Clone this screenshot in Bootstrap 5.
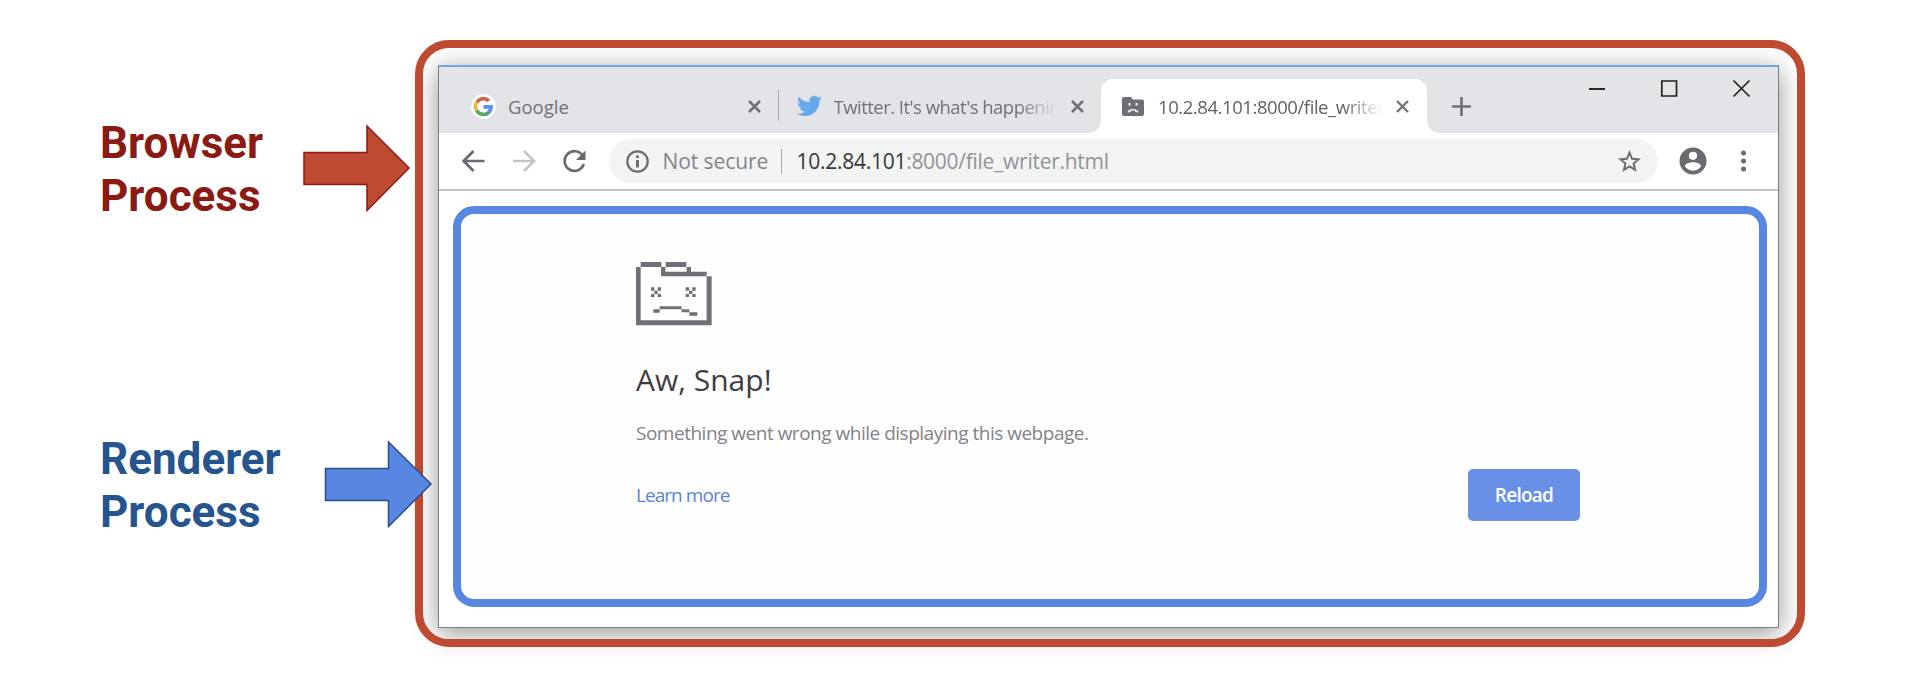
<!DOCTYPE html>
<html lang="en">
<head>
<meta charset="utf-8">
<title>Browser and renderer processes</title>
<link href="https://cdn.jsdelivr.net/npm/bootstrap@5.3.0/dist/css/bootstrap.min.css" rel="stylesheet">
<style>
body{background:#fff;overflow:hidden;font-family:"Open Sans","Noto Sans",sans-serif;color:#717276}
svg{display:block;flex:none;overflow:visible}
.diagram{width:1930px;height:684px}
.legend-col{width:415px;padding:117px 0 0 100px;gap:209px;z-index:2}
.proc{font:700 44px/53.4px Roboto,sans-serif;color:#8a1a12}
.proc-name{flex:none}
.proc-arrow{margin-top:8px}
.proc-blue{color:#25548f}
.outer-frame{width:1390px;height:606.5px;margin-top:40px;padding:25px 26px 18.5px 23px}
.outer-frame::after{content:"";position:absolute;inset:0;border:8.5px solid #be4a31;border-radius:34px;pointer-events:none}
.win{border:1px solid #7d7d7d;border-top:2px solid #78a5db;box-shadow:0 5px 24px rgba(0,0,0,.42)}
.tabstrip{height:66px;background:#e3e4e8;padding:12px 0 0 19px}
.tab-item{height:54px;font-size:18.5px;padding-right:17px}
.tab-title{white-space:nowrap;overflow:hidden;line-height:53px;position:relative}
.fade-end{-webkit-mask-image:linear-gradient(90deg,#000 calc(100% - 40px),transparent);mask-image:linear-gradient(90deg,#000 calc(100% - 40px),transparent)}
.sep{width:1px;background:#a5a7ab}
.tab-on{background:#fff;border-radius:12px 12px 0 0}
.tab-on::before,.tab-on::after{content:"";position:absolute;bottom:0;width:12px;height:12px}
.tab-on::before{left:-12px;background:radial-gradient(circle at 0 0,transparent 11.5px,#fff 12px)}
.tab-on::after{right:-12px;background:radial-gradient(circle at 100% 0,transparent 11.5px,#fff 12px)}
.toolbar{height:58px;border-bottom:2px solid #c2c2c2;padding-left:23px}
.omni{width:1049px;height:44px;border-radius:22px;background:#f2f4f4;font-size:21px;line-height:44px;padding:0 17px}
.page{padding:15px 11px 20.5px 13.5px;background:#fff}
.renderer{border:8px solid #5787e1;border-radius:21px;background:#fefefe;padding:48px 179px 0 175.5px}
.snap{font-size:30px;line-height:40px;color:#3e3e42;margin-top:35px}
.msg{font-size:19px;line-height:26px;letter-spacing:-.49px;margin-top:20px;color:#828287}
.learn{font-size:19px;letter-spacing:-.95px;color:#5a83d5}
.reload{width:112px;height:52px;background:#6790e6;border:0;border-radius:5px;color:#fff;font-size:19px;font-weight:600;letter-spacing:-.75px;padding:0;line-height:52px}
</style>
</head>
<body>
<div class="diagram d-flex align-items-start">
  <div class="legend-col d-flex flex-column flex-shrink-0 position-relative">
    <div class="proc d-flex">
      <div class="proc-name" style="width:203px">Browser<br>Process</div>
      <svg class="proc-arrow" width="107" height="86" viewBox="0 0 107 86"><path d="M1 27.500H64V1L106 43 64 85.500V59.500H1z" fill="#be4a31" stroke="#8b1a16" stroke-width="1.500"/></svg>
    </div>
    <div class="proc proc-blue d-flex">
      <div class="proc-name" style="width:225px">Renderer<br>Process</div>
      <svg class="proc-arrow" width="107" height="86" viewBox="0 0 107 86"><path d="M.5 27.500H63.500V1L106 43 63.500 85.500V59.500H.5z" fill="#5787e1" stroke="#2b4d8e" stroke-width="1.500"/></svg>
    </div>
  </div>

  <div class="outer-frame position-relative flex-shrink-0 d-flex">
    <div class="win flex-fill d-flex flex-column">
      <div class="tabstrip d-flex align-items-end">
        <div class="tab-item d-flex align-items-center" style="width:320px">
          <svg style="margin:0 12px 0 13px" width="25" height="25" viewBox="212 190 76 76"><circle cx="250" cy="228" r="38" fill="#fff"/><g fill="none" stroke-width="11"><path d="M266.500 210.500A24 24 0 0 0 230 215" stroke="#d4604f"/><path d="M230 215a24 24 0 0 0-1 25" stroke="#f0bb42"/><path d="M229 240a24 24 0 0 0 36 7" stroke="#5ba865"/><path d="M264 248a24 24 0 0 0 9-19H250" stroke="#5f8fee"/></g></svg>
          <span class="tab-title flex-fill">Google</span>
          <svg width="13" height="13" viewBox="0 0 13 13"><path d="M1 1l11 11M12 1L1 12" stroke="#707175" stroke-width="2.500"/></svg>
        </div>
        <div class="sep align-self-center" style="height:31px;margin-top:-1px"></div>
        <div class="tab-item d-flex align-items-center" style="width:322px">
          <svg style="margin:0 12px 0 17.500px" width="25" height="22" viewBox="0 0 24 20"><path d="M23.950 2.600a10 10 0 0 1-2.800.8 5 5 0 0 0 2.150-2.700 10 10 0 0 1-3.100 1.150A4.900 4.900 0 0 0 11.900 6.300 14 14 0 0 1 1.700 1.100a4.900 4.900 0 0 0 1.500 6.500A5 5 0 0 1 1 7a4.900 4.900 0 0 0 3.950 4.900 5 5 0 0 1-2.200.1 4.900 4.900 0 0 0 4.600 3.400A10 10 0 0 1 0 17.450 14 14 0 0 0 7.550 19.700c9.100 0 14.300-7.700 14-14.700a10 10 0 0 0 2.400-2.400z" fill="#67a9ea"/></svg>
          <span class="tab-title fade-end" style="width:223px;letter-spacing:-.52px">Twitter. It's what's happenin</span>
          <svg class="ms-auto" width="13" height="13" viewBox="0 0 13 13"><path d="M1 1l11 11M12 1L1 12" stroke="#707175" stroke-width="2.500"/></svg>
        </div>
        <div class="tab-item tab-on position-relative d-flex align-items-center" style="width:326px;padding-right:18.500px">
          <svg style="margin:0 14.500px 0 20.500px" width="22" height="19" viewBox="0 0 22 19"><path d="M2 0h7l2 2.500h9a2 2 0 0 1 2 2V17a2 2 0 0 1-2 2H2a2 2 0 0 1-2-2V2a2 2 0 0 1 2-2z" fill="#6d6e73"/><path d="M7.500 6v2.500M14.500 6v2.500" stroke="#fff" stroke-width="1.800"/><path d="M6.500 15.500v-1.300h2v-1.400h5v1.400h2v1.300" fill="none" stroke="#fff" stroke-width="1.300"/></svg>
          <span class="tab-title fade-end" style="width:224px;letter-spacing:-.43px;color:#606165">10.2.84.101:8000/file_writer</span>
          <svg class="ms-auto" width="13" height="13" viewBox="0 0 13 13"><path d="M1 1l11 11M12 1L1 12" stroke="#707175" stroke-width="2.300"/></svg>
        </div>
        <svg class="align-self-center" style="margin-left:25px" width="19" height="19" viewBox="0 0 19 19"><path d="M9.500 0v19M0 9.500h19" stroke="#6f7074" stroke-width="2.600"/></svg>
        <div class="d-flex ms-auto align-self-start" style="padding-right:28.500px;gap:56px;margin-top:1px">
          <svg width="16" height="17" viewBox="0 0 16 17"><path d="M0 9h16" stroke="#151515" stroke-width="1.800"/></svg>
          <svg width="16" height="17" viewBox="0 0 16 17"><path d="M.8 1h14.700v15H.8z" fill="none" stroke="#222" stroke-width="1.700"/></svg>
          <svg width="17" height="17" viewBox="0 0 17 17"><path d="M.5.5l16 16M16.500.5L.5 16.500" stroke="#222" stroke-width="1.700"/></svg>
        </div>
      </div>

      <div class="toolbar d-flex align-items-center">
        <svg width="23" height="22" viewBox="0 0 23 22"><path d="M22.500 11H2M11.500 1L1.600 11l9.900 10" fill="none" stroke="#6a6b70" stroke-width="2.700"/></svg>
        <svg style="margin-left:28px" width="23" height="22" viewBox="0 0 23 22"><path d="M0 11h20.500M11 1l10 10-10 10" fill="none" stroke="#c3c4c6" stroke-width="2.700"/></svg>
        <svg style="margin-left:27px" width="23" height="23" viewBox="0 0 23 23"><path d="M19.500 5.400A9.800 9.800 0 1 0 20.800 14" fill="none" stroke="#6a6b70" stroke-width="2.700"/><path d="M22.500.5v9.500H13z" fill="#6a6b70"/></svg>
        <div class="omni d-flex align-items-center" style="margin-left:23px">
          <svg width="23" height="23" viewBox="0 0 23 23"><circle cx="11.500" cy="11.500" r="10.200" fill="none" stroke="#6d6e72" stroke-width="2.300"/><path d="M11.500 10v7.500M11.500 5.500V8" stroke="#6d6e72" stroke-width="3"/></svg>
          <span style="margin-left:13.500px;width:118.500px;letter-spacing:-.08px;color:#838489">Not secure</span>
          <span class="sep" style="height:25px"></span>
          <span style="margin-left:14.500px;letter-spacing:-.27px;color:#929396"><span style="color:#36373b">10.2.84.101</span>:8000/file_writer.html</span>
          <svg class="ms-auto" width="23" height="22" viewBox="0 0 23 22"><path d="M11.500 2.700l2.500 6 6.500.6-4.900 4.300 1.500 6.300-5.600-3.400-5.600 3.400 1.500-6.300-4.900-4.300 6.500-.6z" fill="none" stroke="#6d6e72" stroke-width="2"/></svg>
        </div>
        <svg style="margin-left:21px" width="28" height="28" viewBox="0 0 28 28"><path fill-rule="evenodd" d="M14 .5a13.500 13.500 0 1 0 0 27 13.500 13.500 0 0 0 0-27zm0 4.200a4.100 4.100 0 1 1 0 8.200 4.100 4.100 0 0 1 0-8.200zm0 19c-3.500 0-6.400-1.800-8.100-4.400 0-2.700 5.400-4.100 8.100-4.100s8.100 1.400 8.100 4.100c-1.700 2.600-4.600 4.400-8.100 4.400z" fill="#6a6b70"/></svg>
        <svg style="margin-left:34px" width="5" height="22" viewBox="0 0 5 22"><g fill="#6a6b70"><circle cx="2.500" cy="3" r="2.500"/><circle cx="2.500" cy="11" r="2.500"/><circle cx="2.500" cy="19" r="2.500"/></g></svg>
      </div>

      <div class="page flex-fill d-flex">
        <div class="renderer flex-fill d-flex flex-column">
          <svg width="76" height="63.300" viewBox="108 65 228 190" fill="#6f7075"><path d="M122 65h62v15h-62zM108 80h14v160h198V108h15v147H108zM183 80h13v14h64V80h13v14h47v14H183zM197 65h62v15h-62z"/><path d="M153 141h10v10h10v-10h10v10h-10v10h10v9h-10v-9h-10v9h-10v-9h10v-10h-10zM257 141h10v10h10v-10h10v10h-10v10h10v9h-10v-9h-10v9h-10v-9h10v-10h-10zM160 207h19v10h-19zM179 198h66v9h-66zM245 207h23v9h-23zM268 216h24v10h-24z"/></svg>
          <div class="snap">Aw, Snap!</div>
          <div class="msg">Something went wrong while displaying this webpage.</div>
          <div class="d-flex justify-content-between align-items-center" style="margin-top:22.500px">
            <a class="learn text-decoration-none" href="#">Learn more</a>
            <button class="btn reload" type="button">Reload</button>
          </div>
        </div>
      </div>
    </div>
  </div>
</div>
<script src="https://cdn.jsdelivr.net/npm/bootstrap@5.3.0/dist/js/bootstrap.bundle.min.js"></script>
</body>
</html>
